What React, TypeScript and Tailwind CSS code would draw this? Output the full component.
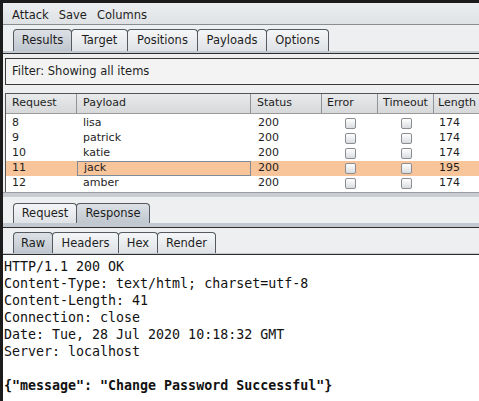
import React from 'react';

const ui = { fontFamily: '"DejaVu Sans", Verdana, sans-serif' };
const mono = { fontFamily: '"DejaVu Sans Mono", "Liberation Mono", monospace' };

type TabProps = { label: string; active?: boolean; w: string; h: string };

const Tab = ({ label, active, w, h }: TabProps) => (
  <div
    className={`${w} ${h} -ml-px first:ml-0 flex items-center justify-center pt-[1px] border border-b-0 border-[#555a60] rounded-t-[4px] text-[11.5px] text-[#1e1e1e] ${
      active ? 'bg-linear-to-b from-[#dde1e6] to-[#bfc6ce]' : 'bg-linear-to-b from-[#f5f6f7] to-[#dfe2e6]'
    }`}>
    {label}
  </div>
);

const rows = [
  { req: '8', payload: 'lisa', status: '200', len: '174' },
  { req: '9', payload: 'patrick', status: '200', len: '174' },
  { req: '10', payload: 'katie', status: '200', len: '174' },
  { req: '11', payload: 'jack', status: '200', len: '195', selected: true },
  { req: '12', payload: 'amber', status: '200', len: '174' }
];

const cols = [
  { title: 'Request', w: 'w-[71px]', pad: 'pl-[6px]' },
  { title: 'Payload', w: 'w-[174px]', pad: 'pl-[6px]' },
  { title: 'Status', w: 'w-[71px]', pad: 'pl-[6px]' },
  { title: 'Error', w: 'w-[56px]', pad: 'pl-[5px]' },
  { title: 'Timeout', w: 'w-[56px]', pad: 'pl-[5px]' },
  { title: 'Length', w: 'w-[60px]', pad: 'pl-[4px]' }
];

const Checkbox = () => (
  <div className="w-[11px] h-[11px] rounded-[2px] border border-[#8a8d91] bg-linear-to-b from-[#ffffff] to-[#d9dcdf]" />
);

const responseLines = [
  'HTTP/1.1 200 OK',
  'Content-Type: text/html; charset=utf-8',
  'Content-Length: 41',
  'Connection: close',
  'Date: Tue, 28 Jul 2020 10:18:32 GMT',
  'Server: localhost',
  ''
];

export default function App() {
  return (
    <div className="w-[479px] h-[401px] overflow-hidden bg-[#1c1c1c] pt-[3px] pl-[3px]" style={ui}>
      <div className="h-full flex flex-col bg-[#eeeff0] text-[#1e1e1e]">
        {/* menu bar */}
        <div className="h-[22px] shrink-0 flex items-center gap-[10px] pl-[9px] pt-[4px] text-[11.5px] bg-linear-to-b from-[#eceef0] to-[#dfe2e5] border-b border-[#8a8d90]">
          <span>Attack</span>
          <span>Save</span>
          <span>Columns</span>
        </div>

        {/* main tabs */}
        <div className="mt-[4px] flex pl-[10px]">
          <Tab label="Results" active w="w-[59px]" h="h-[22px]" />
          <Tab label="Target" w="w-[57px]" h="h-[22px]" />
          <Tab label="Positions" w="w-[71px]" h="h-[22px]" />
          <Tab label="Payloads" w="w-[70px]" h="h-[22px]" />
          <Tab label="Options" w="w-[63px]" h="h-[22px]" />
        </div>
        <div className="h-[3px] shrink-0 bg-[#c3c9d0] border-b border-[#2e2e2e]" />

        {/* filter */}
        <div className="mt-[4px] ml-[2px] w-[490px] h-[27px] shrink-0 border border-[#3a3a3a] flex items-center pl-[6px] pt-[1px] text-[11.5px] bg-[#f3f3f3]">
          Filter: Showing all items
        </div>

        {/* results table */}
        <div className="mt-[8px] ml-[2px] w-[500px] shrink-0 border-l border-t border-[#555] bg-white">
          <div className="flex h-[20px] bg-linear-to-b from-[#e9eaeb] to-[#d6d8da] border-b border-[#9a9a9a] text-[11px]">
            {cols.map((c) => (
              <div key={c.title} className={`${c.w} ${c.pad} shrink-0 flex items-center border-r border-[#8f9296]`}>
                {c.title}
              </div>
            ))}
          </div>
          <div className="pt-[2px] pb-[1px] text-[11px]">
            {rows.map((r) => (
              <div key={r.req} className={`flex h-[15px] ${r.selected ? 'bg-[#f8c49a]' : ''}`}>
                <div className="w-[71px] shrink-0 pl-[6px] flex items-center">{r.req}</div>
                <div
                  className={`w-[174px] shrink-0 pl-[6px] flex items-center ${
                    r.selected ? 'border border-[#7f8a99] pl-[5px]' : ''
                  }`}>
                  {r.payload}
                </div>
                <div className="w-[71px] shrink-0 pl-[7px] flex items-center">{r.status}</div>
                <div className="w-[56px] shrink-0 flex items-center justify-center">
                  <Checkbox />
                </div>
                <div className="w-[56px] shrink-0 flex items-center justify-center">
                  <Checkbox />
                </div>
                <div className="w-[60px] shrink-0 pl-[5px] flex items-center">{r.len}</div>
              </div>
            ))}
          </div>
        </div>
        <div className="h-[5px] shrink-0 bg-[#c9cdd2] border-t border-[#9a9da1]" />

        {/* request / response tabs */}
        <div className="mt-[6px] flex pl-[10px]">
          <Tab label="Request" w="w-[64px]" h="h-[20px]" />
          <Tab label="Response" active w="w-[74px]" h="h-[20px]" />
        </div>
        <div className="h-[5px] shrink-0 bg-[#c3c9d0] border-b border-[#2e2e2e]" />

        {/* raw / headers tabs */}
        <div className="mt-[4px] flex pl-[10px]">
          <Tab label="Raw" active w="w-[40px]" h="h-[21px]" />
          <Tab label="Headers" w="w-[67px]" h="h-[21px]" />
          <Tab label="Hex" w="w-[40px]" h="h-[21px]" />
          <Tab label="Render" w="w-[59px]" h="h-[21px]" />
        </div>
        <div className="h-[2px] shrink-0 bg-[#c3c9d0] border-b border-[#2e2e2e]" />

        {/* response body */}
        <div className="flex-1 bg-white pl-[1px] pt-[3px] text-[13.3px] leading-[17px] text-[#111]" style={mono}>
          {responseLines.map((l, i) => (
            <div key={i} className="h-[17px] whitespace-pre">
              {l}
            </div>
          ))}
          <div className="h-[17px] whitespace-pre font-bold">{'{"message": "Change Password Successful"}'}</div>
        </div>
      </div>
    </div>
  );
}
